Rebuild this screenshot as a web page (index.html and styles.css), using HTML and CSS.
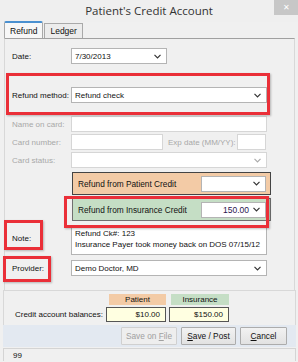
FILE: index.html
```html
<!DOCTYPE html>
<html lang="en">
<head>
  <meta charset="UTF-8">
  <title>Patient's Credit Account</title>
  <link rel="stylesheet" href="styles.css">
</head>
<body>
  <div class="window">
    <div class="titlebar">
      <span class="spacer"></span>
      <span class="title">Patient's Credit Account</span>
      <span class="close">&#x2715;</span>
    </div>

    <div class="tabs">
      <div class="tab active">Refund</div>
      <div class="tab">Ledger</div>
    </div>

    <div class="panel">
      <div class="row row-date">
        <label>Date:</label>
        <div class="field w-short">7/30/2013<svg class="chev" width="7" height="5" viewBox="0 0 7 5"><polyline points="0.5,0.8 3.5,3.8 6.5,0.8" fill="none" stroke="#333" stroke-width="1.2"/></svg></div>
      </div>

      <div class="row row-method">
        <label>Refund method:</label>
        <div class="field">Refund check<svg class="chev" width="7" height="5" viewBox="0 0 7 5"><polyline points="0.5,0.8 3.5,3.8 6.5,0.8" fill="none" stroke="#333" stroke-width="1.2"/></svg></div>
      </div>

      <div class="row row-name">
        <label class="off">Name on card:</label>
        <div class="field off-field"></div>
      </div>

      <div class="row row-card">
        <label class="off">Card number:</label>
        <div class="field off-field w-card"></div>
        <span class="off exp">Exp date (MM/YY):</span>
        <div class="field off-field w-exp"></div>
      </div>

      <div class="row row-status">
        <label class="off">Card status:</label>
        <div class="field off-field"><svg class="chev" width="7" height="5" viewBox="0 0 7 5"><polyline points="0.5,0.8 3.5,3.8 6.5,0.8" fill="none" stroke="#aaa" stroke-width="1.2"/></svg></div>
      </div>

      <div class="credit peach">
        <span>Refund from Patient Credit</span>
        <div class="field amount"><svg class="chev" width="7" height="5" viewBox="0 0 7 5"><polyline points="0.5,0.8 3.5,3.8 6.5,0.8" fill="none" stroke="#333" stroke-width="1.2"/></svg></div>
      </div>

      <div class="credit green">
        <span>Refund from Insurance Credit</span>
        <div class="field amount"><span class="num">150.00</span><svg class="chev" width="7" height="5" viewBox="0 0 7 5"><polyline points="0.5,0.8 3.5,3.8 6.5,0.8" fill="none" stroke="#333" stroke-width="1.2"/></svg></div>
      </div>

      <div class="row row-note">
        <label>Note:</label>
        <div class="field note">Refund Ck#: 123<br>Insurance Payer took money back on DOS 07/15/12</div>
      </div>

      <div class="row row-provider">
        <label>Provider:</label>
        <div class="field">Demo Doctor, MD<svg class="chev" width="7" height="5" viewBox="0 0 7 5"><polyline points="0.5,0.8 3.5,3.8 6.5,0.8" fill="none" stroke="#333" stroke-width="1.2"/></svg></div>
      </div>

      <div class="mark mark-method"></div>
      <div class="mark mark-green"></div>
      <div class="mark mark-note"></div>
      <div class="mark mark-provider"></div>
    </div>

    <div class="balances">
      <div class="bal-grid">
        <span></span>
        <span class="head peach-bg">Patient</span>
        <span class="head green-bg">Insurance</span>
        <span class="bal-label">Credit account balances:</span>
        <span class="bal">$10.00</span>
        <span class="bal">$150.00</span>
      </div>
    </div>

    <div class="actions">
      <button class="btn btn-file" disabled>Save on <u>F</u>ile</button>
      <button class="btn btn-post"><u>S</u>ave / Post</button>
      <button class="btn btn-cancel"><u>C</u>ancel</button>
    </div>

    <div class="statusbar"><span class="cell">99</span></div>
  </div>
</body>
</html>
```

FILE: styles.css
```css
body {
  margin: 0;
  background: #f0f0f0;
  font-family: "Liberation Sans", Arial, sans-serif;
  font-size: 8px;
  color: #111;
}

.window {
  width: 298px;
  height: 362px;
  display: flex;
  flex-direction: column;
  overflow: hidden;
}

.titlebar {
  height: 22px;
  display: flex;
  align-items: flex-start;
  background: #efefef;
}

.spacer {
  width: 24px;
}

.title {
  flex: 1;
  text-align: center;
  font-family: "Open Sans", sans-serif;
  font-size: 11.5px;
  line-height: 22px;
  color: #333;
}

.close {
  width: 24px;
  height: 15px;
  background: #c7c7c7;
  color: #fff;
  font-size: 8px;
  text-align: center;
  line-height: 15px;
}

.tabs {
  display: flex;
  align-items: flex-end;
  height: 17px;
  padding-left: 4px;
  margin-top: -1px;
}

.tab {
  height: 14px;
  line-height: 14px;
  padding: 0 5px;
  border: 1px solid #a9a9a9;
  border-bottom: none;
  background: #ececec;
  font-size: 8.5px;
}

.tab + .tab {
  margin-left: 1px;
}

.tab.active {
  height: 16px;
  line-height: 17px;
  background: #f7f7f7;
  border-top: 2px solid #4a90d0;
  border-radius: 2px 2px 0 0;
  margin-bottom: -1px;
  position: relative;
}

.panel {
  position: relative;
  margin: 0 3px 0 4px;
  height: 251px;
  border-top: 1px solid #a0a0a0;
  border-left: 1px solid #d8d8d8;
  border-right: 1px solid #d8d8d8;
  display: flex;
  flex-direction: column;
}

.row {
  display: flex;
  align-items: center;
}

.row label,
.exp {
  width: 59px;
  padding-left: 7px;
}

.off {
  color: #a8a8a8;
}

.field {
  width: 191px;
  height: 14px;
  border: 1px solid #b4b4b4;
  background: #fff;
  display: flex;
  align-items: center;
  padding-left: 3px;
  box-sizing: content-box;
  white-space: nowrap;
  position: relative;
}

.field .chev {
  margin-left: auto;
  margin-right: 5px;
}

.off-field {
  border-color: #d6d6d6;
}

.w-short {
  width: 91px;
}

.w-card {
  width: 87px;
}

.exp {
  width: auto;
  padding-left: 5px;
  padding-right: 1px;
  white-space: nowrap;
}

.w-exp {
  width: 24px;
}

.row-date { margin-top: 9px; }
.row-method { margin-top: 23px; }
.row-name { margin-top: 13px; }
.row-card { margin-top: 2px; }
.row-status { margin-top: 2px; }

.credit {
  margin: 0 0 0 67px;
  width: 192px;
  height: 21px;
  border: 1px solid #444;
  display: flex;
  align-items: center;
  padding-left: 5px;
  font-size: 8.3px;
}

.credit .amount {
  width: 60px;
  margin-left: auto;
  margin-right: 4px;
  height: 14px;
}

.credit .num {
  margin-left: auto;
  margin-right: 4px;
  color: #2a1650;
  font-size: 8.5px;
}

.credit .num + .chev {
  margin-left: 0;
}

.peach {
  margin-top: 4px;
  background: #f3cba6;
}

.green {
  margin-top: 3px;
  background: #c5dec5;
  border-color: #707070;
}

.row-note {
  margin-top: 5px;
  align-items: flex-start;
}

.row-note label {
  margin-top: 8px;
}

.field.note {
  height: 26px;
  display: block;
  padding-top: 1px;
  line-height: 11px;
}

.row-provider { margin-top: 5px; }

.mark {
  position: absolute;
  border: 3px solid #ea2f38;
  box-shadow: 1px 1px 2px rgba(0, 0, 0, 0.25);
}

.mark-method {
  left: 1px;
  top: 34px;
  width: 258px;
  height: 36px;
}

.mark-green {
  left: 59px;
  top: 157px;
  width: 199px;
  height: 26px;
}

.mark-note {
  left: -1px;
  top: 181px;
  width: 33px;
  height: 24px;
}

.mark-provider {
  left: -2px;
  top: 217px;
  width: 42px;
  height: 20px;
}

.balances {
  margin: 0 2px 0 3px;
  height: 34px;
  border-top: 1px solid #d8d8d8;
  border-left: 1px solid #d8d8d8;
  border-right: 1px solid #d8d8d8;
}

.bal-grid {
  display: grid;
  grid-template-columns: 99px 60px 60px;
  column-gap: 3px;
  row-gap: 2px;
  margin-top: 3px;
}

.head {
  height: 11px;
  line-height: 11px;
  text-align: center;
  margin-left: 3px;
}

.peach-bg { background: #f3cba6; }
.green-bg { background: #c5dec5; margin-left: 2px; }

.bal-label {
  text-align: right;
  align-self: center;
}

.bal {
  height: 13px;
  line-height: 13px;
  border: 1px solid #555;
  background: #ffffe1;
  text-align: right;
  padding-right: 5px;
}

.actions {
  height: 22px;
  margin: 0 2px 0 3px;
  background: #e3e9f1;
  display: flex;
  justify-content: flex-end;
  align-items: center;
  gap: 4px;
  padding-right: 9px;
}

.btn {
  height: 18px;
  padding: 0;
  font-family: inherit;
  font-size: 8.3px;
  color: #111;
  background: linear-gradient(#f2f2f2, #e2e2e2);
  border: 1px solid #acacac;
  border-radius: 1px;
}

.btn-file { width: 56px; }
.btn-post { width: 55px; }
.btn-cancel { width: 47px; }

.btn:disabled {
  color: #a0a0a0;
  border-color: #d0d0d0;
  background: #eeeeee;
}

.statusbar {
  margin: 1px 2px 0 3px;
  height: 12px;
  border: 1px solid #d4d4d4;
  border-bottom: none;
}

.cell {
  display: inline-block;
  padding-left: 9px;
  line-height: 13px;
}
```
